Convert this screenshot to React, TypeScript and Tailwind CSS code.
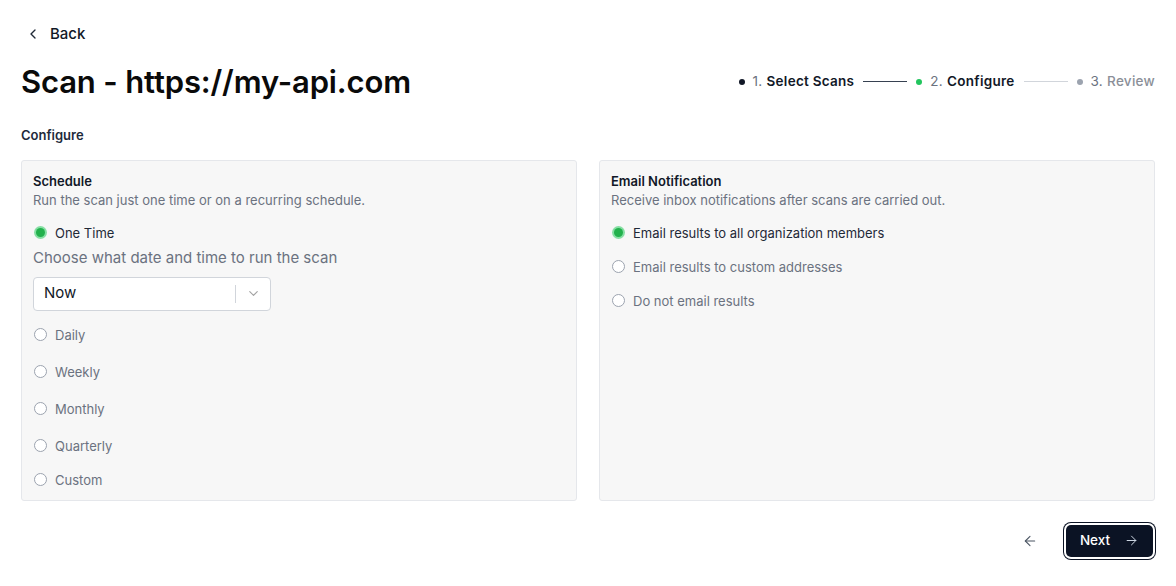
import { ChevronLeft, ChevronDown, ArrowLeft, ArrowRight } from 'lucide-react';

const Radio = ({ checked, label, dark }: { checked?: boolean; label: string; dark?: boolean }) => (
  <label className="flex h-[16px] items-center gap-[8px] pl-[1px]">
    {checked ? (
      <span className="flex h-[13px] w-[13px] items-center justify-center rounded-full bg-[#86dfa4]">
        <span className="h-[9px] w-[9px] rounded-full bg-[#22b14c]" />
      </span>
    ) : (
      <span className="h-[13px] w-[13px] rounded-full border border-[#9ca3af] bg-white" />
    )}
    <span className={`text-[13px] leading-[16px] ${dark ? 'text-[#1f2937]' : 'text-[#6b7280]'}`}>{label}</span>
  </label>
);

const Step = ({ n, label, dot, active }: { n: string; label: string; dot: string; active?: boolean }) => (
  <div className="flex items-center gap-[8px] text-[13.5px] tracking-[0.02em]">
    <span className={`h-[6px] w-[6px] rounded-full ${dot}`} />
    <span>
      <span className="text-[#6b7280]">{n} </span>
      <span className={active ? 'font-semibold text-[#111827]' : 'font-medium text-[#8b8f98]'}>{label}</span>
    </span>
  </div>
);

export default function App() {
  const schedules = ['Daily', 'Weekly', 'Monthly', 'Quarterly'];

  return (
    <div className="min-h-[586px] w-[1176px] bg-white px-[21px] font-['Inter',sans-serif] text-[#111827]">
      {/* Back */}
      <div className="flex items-center gap-[9px] pt-[23px] pl-[4px]">
        <ChevronLeft size={16} strokeWidth={2} className="text-[#1f2937]" />
        <span className="text-[15px] font-medium">Back</span>
      </div>

      {/* Title + stepper */}
      <div className="mt-[12px] flex items-center justify-between">
        <h1 className="text-[31px] font-semibold leading-[48px] tracking-[-0.005em] text-[#0a0a0a]">
          Scan - https://my-api.com
        </h1>
        <div className="flex items-center gap-[8px]">
          <Step n="1." label="Select Scans" dot="bg-[#111827]" active />
          <span className="mx-[1px] h-px w-[44px] bg-[#374151]" />
          <Step n="2." label="Configure" dot="bg-[#22c55e]" active />
          <span className="mx-[1px] h-px w-[44px] bg-[#d1d5db]" />
          <Step n="3." label="Review" dot="bg-[#9ca3af]" />
        </div>
      </div>

      <div className="mt-[21px] text-[13px] font-semibold leading-[16px] text-[#1e2a3b]">Configure</div>

      {/* Cards */}
      <div className="mt-[17px] grid grid-cols-2 gap-[22px]">
        <div className="h-[341px] rounded-[3px] border border-[#e5e7eb] bg-[#f7f7f7] px-[11px] pt-[12px]">
          <div className="text-[13px] font-semibold leading-[16px] text-[#111827]">Schedule</div>
          <div className="mt-[3px] text-[13px] leading-[16px] text-[#6b7280]">
            Run the scan just one time or on a recurring schedule.
          </div>
          <div className="mt-[17px]">
            <Radio checked dark label="One Time" />
          </div>
          <div className="mt-[7px] text-[15px] leading-[20px] text-[#6b7280]">Choose what date and time to run the scan</div>
          <div className="mt-[9px] flex h-[34px] w-[238px] items-center rounded-[4px] border border-[#d1d5db] bg-white pl-[10px]">
            <span className="flex-1 text-[15px] text-[#111827]">Now</span>
            <span className="h-[18px] w-px bg-[#d1d5db]" />
            <span className="flex w-[34px] items-center justify-center">
              <ChevronDown size={15} strokeWidth={1.8} className="text-[#a3a3a3]" />
            </span>
          </div>
          <div className="mt-[16px] flex flex-col gap-[21px]">
            {schedules.map((s) => (
              <Radio key={s} label={s} />
            ))}
          </div>
          <div className="mt-[18px]">
            <Radio label="Custom" />
          </div>
        </div>

        <div className="h-[341px] rounded-[3px] border border-[#e5e7eb] bg-[#f7f7f7] px-[11px] pt-[12px]">
          <div className="text-[13px] font-semibold leading-[16px] text-[#111827]">Email Notification</div>
          <div className="mt-[3px] text-[13px] leading-[16px] text-[#6b7280]">
            Receive inbox notifications after scans are carried out.
          </div>
          <div className="mt-[17px] flex flex-col gap-[18px]">
            <Radio checked dark label="Email results to all organization members" />
            <Radio label="Email results to custom addresses" />
            <Radio label="Do not email results" />
          </div>
        </div>
      </div>

      {/* Footer */}
      <div className="mt-[24px] flex items-center justify-end gap-[28px] pr-[2px]">
        <ArrowLeft size={16} strokeWidth={1.6} className="text-[#4b5563]" />
        <button className="flex h-[32px] w-[87px] items-center justify-center gap-[14px] rounded-[5px] bg-[#0b1324] text-[13.5px] font-medium text-white ring-1 ring-[#0b1324] ring-offset-2 ring-offset-white outline-none">
          Next
          <ArrowRight size={15} strokeWidth={1.6} className="text-[#cbd5e1]" />
        </button>
      </div>
    </div>
  );
}
